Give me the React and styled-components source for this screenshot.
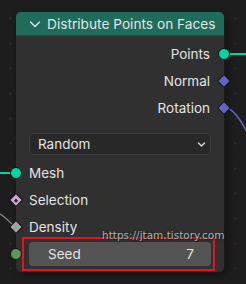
import React from "react";
import styled, { createGlobalStyle } from "styled-components";

const Colours = {
  canvas: "#1d1d1d",
  body: "#303030",
  header: "#1e6c59",
  text: "#e4e4e4",
  geometry: "#00d6a3",
  vector: "#6363c7",
  bool: "#cca6d6",
  float: "#a1a1a1",
  int: "#5a995e",
};

const GlobalStyle = createGlobalStyle`
  html, body {
    margin: 0;
    padding: 0;
    background: ${Colours.canvas};
  }
  body {
    font-family: Inter, "Noto Sans", sans-serif;
    -webkit-font-smoothing: antialiased;
  }
`;

const Canvas = styled.div`
  position: relative;
  width: 246px;
  height: 284px;
  overflow: hidden;
  padding: 12px 0 0 16px;
  box-sizing: border-box;
  background-color: ${Colours.canvas};
  background-image: radial-gradient(circle, #2a2a2a 1px, transparent 1.2px);
  background-size: 25px 25px;
  background-position: -2px 6px;
`;

const Links = styled.svg`
  position: absolute;
  left: 0;
  top: 0;
  pointer-events: none;
`;

const Node = styled.div`
  position: relative;
  width: 208px;
  height: 260px;
  border-radius: 5px;
  background: ${Colours.body};
  box-shadow: 0 0 0 1px #1a1a1a, 3px 3px 6px rgba(0, 0, 0, 0.35);
  display: flex;
  flex-direction: column;
`;

const Header = styled.div`
  height: 24px;
  border-radius: 5px 5px 0 0;
  background: ${Colours.header};
  display: flex;
  align-items: center;
  gap: 6px;
  padding-left: 13px;
  color: ${Colours.text};
  font-size: 13.7px;
  box-shadow: inset 0 -1px 0 rgba(0, 0, 0, 0.25);
`;

const Body = styled.div`
  display: flex;
  flex-direction: column;
  padding: 4px 0 5px;
`;

const Row = styled.div`
  position: relative;
  height: 27px;
  display: flex;
  align-items: center;
  justify-content: ${(props) => (props.output ? "flex-end" : "flex-start")};
  padding: ${(props) => (props.output ? "0 14px 0 0" : "0 0 0 13px")};
  color: ${Colours.text};
  font-size: 13.5px;
`;

const Socket = styled.span`
  position: absolute;
  top: 50%;
  ${(props) =>
    props.shape === "diamond"
      ? props.output
        ? "right: -5px;"
        : "left: -5px;"
      : props.output
      ? "right: -6px;"
      : "left: -6px;"}
  width: ${(props) => (props.shape === "diamond" ? "8px" : "10px")};
  height: ${(props) => (props.shape === "diamond" ? "8px" : "10px")};
  margin-top: ${(props) => (props.shape === "diamond" ? "-5px" : "-6px")};
  background: ${(props) => props.colour};
  border: 1px solid #111;
  border-radius: ${(props) => (props.shape === "diamond" ? "1px" : "50%")};
  transform: ${(props) => (props.shape === "diamond" ? "rotate(45deg)" : "none")};
  display: flex;
  align-items: center;
  justify-content: center;
  &::after {
    content: "";
    display: ${(props) => (props.dot ? "block" : "none")};
    width: 3px;
    height: 3px;
    background: #2a2a2a;
  }
`;

const Dropdown = styled.div`
  margin: 12px 13px 4px 13px;
  height: 22px;
  box-sizing: border-box;
  border: 1px solid #3c3c3c;
  border-radius: 4px;
  background: #282828;
  display: flex;
  align-items: center;
  justify-content: space-between;
  padding: 0 4px 0 8px;
  color: ${Colours.text};
  font-size: 13.5px;
`;

const FieldRow = styled(Row)`
  padding: 0 13px 0 13px;
`;

const Field = styled.div`
  flex: 1;
  height: 24px;
  border-radius: 4px;
  background: #545454;
  display: flex;
  align-items: center;
  justify-content: space-between;
  padding: 0 17px 0 19px;
  color: ${Colours.text};
  font-size: 13.5px;
`;

const Highlight = styled.div`
  position: absolute;
  left: 6px;
  right: 9px;
  top: -3px;
  bottom: -4px;
  border: 2px solid #e3141c;
  pointer-events: none;
`;

const Watermark = styled.div`
  position: absolute;
  left: 86px;
  top: -11px;
  font-family: "DejaVu Sans", sans-serif;
  font-size: 10.5px;
  color: #b0b0b0;
  text-shadow: 0 0 2px #202020, 1px 1px 1px #202020;
  white-space: nowrap;
  pointer-events: none;
`;

const Chevron = ({ size = 12 }) => (
  <svg width={size} height={size} viewBox="0 0 12 12">
    <polyline
      points="1.5,4 6,8.5 10.5,4"
      fill="none"
      stroke="#e4e4e4"
      strokeWidth="1.3"
      strokeLinecap="round"
      strokeLinejoin="round"
    />
  </svg>
);

const SmallChevron = () => (
  <svg width="9" height="9" viewBox="0 0 9 9">
    <polyline
      points="1.5,3 4.5,6 7.5,3"
      fill="none"
      stroke="#d8d8d8"
      strokeWidth="1.4"
      strokeLinecap="round"
      strokeLinejoin="round"
    />
  </svg>
);

const outputs = [
  { label: "Points", shape: "circle", colour: Colours.geometry },
  { label: "Normal", shape: "diamond", colour: Colours.vector },
  { label: "Rotation", shape: "diamond", colour: Colours.vector },
];

const inputs = [
  { label: "Mesh", shape: "circle", colour: Colours.geometry },
  { label: "Selection", shape: "diamond", colour: Colours.bool, dot: true },
  { label: "Density", shape: "diamond", colour: Colours.float },
];

const App = () => {
  return (
    <>
      <GlobalStyle />
      <Canvas>
        <Links width="246" height="284">
          <line x1="230" y1="54" x2="246" y2="54" stroke={Colours.geometry} strokeWidth="2" />
          <path d="M228 108 C 236 112, 242 122, 248 134" fill="none" stroke={Colours.vector} strokeWidth="1.5" />
          <line x1="0" y1="173" x2="11" y2="173" stroke={Colours.geometry} strokeWidth="2" />
          <path d="M0 214 C 5 217, 9 221, 13 225" fill="none" stroke="#8a8a8a" strokeWidth="1.2" />
        </Links>
        <Node>
          <Header>
            <Chevron />
            Distribute Points on Faces
          </Header>
          <Body>
            {outputs.map((o) => (
              <Row output key={o.label}>
                {o.label}
                <Socket output shape={o.shape} colour={o.colour} />
              </Row>
            ))}
            <Dropdown>
              Random
              <SmallChevron />
            </Dropdown>
            {inputs.map((i) => (
              <Row key={i.label}>
                <Socket shape={i.shape} colour={i.colour} dot={i.dot} />
                {i.label}
              </Row>
            ))}
            <FieldRow>
              <Socket shape="circle" colour={Colours.int} />
              <Field>
                <span>Seed</span>
                <span>7</span>
              </Field>
              <Highlight />
              <Watermark>https://jtam.tistory.com</Watermark>
            </FieldRow>
          </Body>
        </Node>
      </Canvas>
    </>
  );
};

export default App;
